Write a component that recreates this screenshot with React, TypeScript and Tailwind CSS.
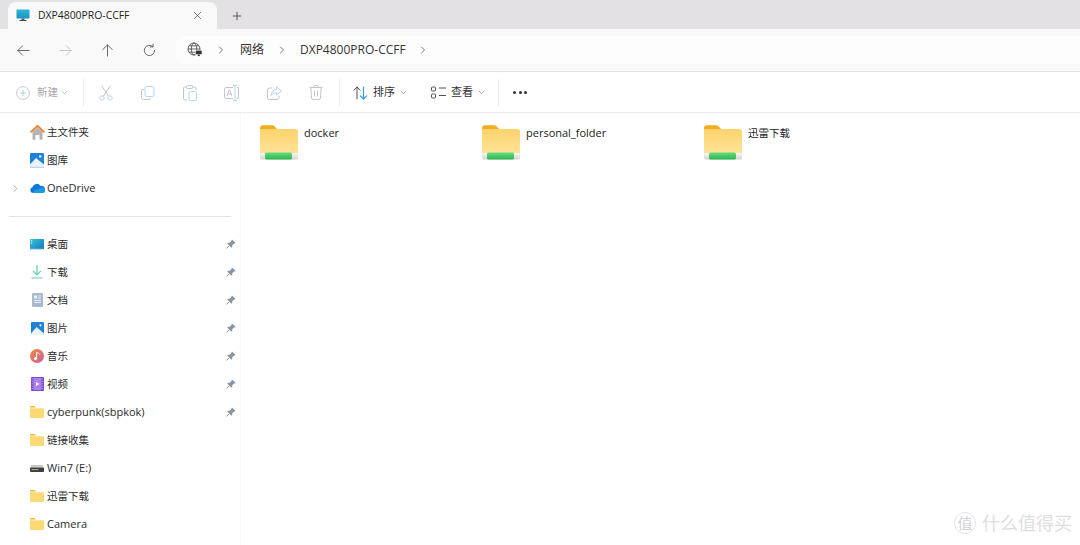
import { ChevronDown, ChevronRight } from "lucide-react";
import type { ReactNode } from "react";

const ui = "font-['Open_Sans','Noto_Sans_CJK_SC',sans-serif]";

function MonitorIcon() {
  return (
    <svg width="14" height="13" viewBox="0 0 14 13" aria-hidden>
      <defs>
        <linearGradient id="mon" x1="0" y1="0" x2="0" y2="1">
          <stop offset="0" stopColor="#2bb8d6" />
          <stop offset="1" stopColor="#1d93bd" />
        </linearGradient>
      </defs>
      <rect x="0.500" y="0.500" width="13" height="9" rx="0.800" fill="url(#mon)" />
      <rect x="5.500" y="9.500" width="3" height="1.800" fill="#52606b" />
      <rect x="3.500" y="11" width="7" height="1" fill="#3d4852" />
    </svg>
  );
}

function Stroke({ d, size = 16, color = "#5f5f5f", width = 1 }: { d: string; size?: number; color?: string; width?: number }) {
  return (
    <svg width={size} height={size} viewBox="0 0 16 16" fill="none" stroke={color} strokeWidth={width} strokeLinecap="round" strokeLinejoin="round" aria-hidden>
      <path d={d} />
    </svg>
  );
}

function NetworkIcon() {
  return (
    <svg width="16" height="16" viewBox="0 0 16 16" fill="none" stroke="#555" strokeWidth="0.9" aria-hidden>
      <circle cx="7" cy="7" r="6" />
      <ellipse cx="7" cy="7" rx="2.700" ry="6" />
      <path d="M1 7h12M2 3.800h10M2 10.200h10" />
      <rect x="8.600" y="8.200" width="6.400" height="4.300" fill="#333" stroke="#fff" strokeWidth="0.600" />
      <rect x="10.800" y="12.500" width="2" height="1.600" fill="#333" stroke="none" />
    </svg>
  );
}

function ToolIcon({ kind }: { kind: string }) {
  const gray = "#c5c5c5";
  const blue = "#b5d6ee";
  if (kind === "cut")
    return (
      <svg width="14" height="16" viewBox="0 0 14 16" fill="none" stroke={gray} aria-hidden>
        <path d="M2.500 0.500 9.500 11M11.500 0.500 4.500 11" />
        <circle cx="3" cy="13" r="2.200" stroke={blue} />
        <circle cx="11" cy="13" r="2.200" stroke={blue} />
      </svg>
    );
  if (kind === "copy")
    return (
      <svg width="14" height="14" viewBox="0 0 14 14" fill="none" aria-hidden>
        <path d="M3 3.500H2A1.500 1.500 0 0 0 .5 5v6.500A2 2 0 0 0 2.500 13.500H8a1.500 1.500 0 0 0 1.500-1.500" stroke={gray} />
        <rect x="4" y="0.500" width="9" height="10" rx="1.800" stroke={blue} />
      </svg>
    );
  if (kind === "paste")
    return (
      <svg width="14" height="16" viewBox="0 0 14 16" fill="none" aria-hidden>
        <path d="M3 2H1.800A1.300 1.300 0 0 0 .5 3.300v10.400a1.300 1.300 0 0 0 1.300 1.300H4M10 2h1.500A1.500 1.500 0 0 1 13 3.500V5" stroke={gray} />
        <rect x="3.500" y="0.500" width="6" height="3" rx="1" stroke={gray} />
        <rect x="6" y="6.500" width="7.500" height="9" rx="1.400" stroke={blue} />
      </svg>
    );
  if (kind === "rename")
    return (
      <svg width="16" height="16" viewBox="0 0 16 16" fill="none" aria-hidden>
        <path d="M9 2.500H2A1.500 1.500 0 0 0 .5 4v8A1.500 1.500 0 0 0 2 13.500h7M13 2.500h1.500V13.500H13" stroke={gray} />
        <path d="M9 .5h4M9 15.500h4M11 .5v15" stroke={blue} />
        <path d="M3 11 5.200 5h.6L8 11M3.800 9h3.400" stroke={gray} />
      </svg>
    );
  if (kind === "share")
    return (
      <svg width="15" height="14" viewBox="0 0 15 14" fill="none" aria-hidden>
        <path d="M5 2H2.500A2 2 0 0 0 .5 4v7.500a2 2 0 0 0 2 2H10a2 2 0 0 0 2-2V10" stroke={gray} />
        <path d="M9.500.8 14.500 5 9.500 9V6.600C7 6.600 5.200 7.500 4 9.500 4.300 6 6.300 3.700 9.500 3.400Z" stroke={blue} />
      </svg>
    );
  return (
    <svg width="14" height="15" viewBox="0 0 14 15" fill="none" stroke={gray} aria-hidden>
      <path d="M.5 2.500h13M5 2.500V1.300A.8.8 0 0 1 5.800.5h2.400a.8.8 0 0 1 .8.8v1.200M1.800 2.500l.7 10.500a1.500 1.500 0 0 0 1.500 1.400h6a1.500 1.500 0 0 0 1.500-1.400l.7-10.500M5.500 5.500v6M8.500 5.500v6" />
    </svg>
  );
}

function NewIcon() {
  return (
    <svg width="14" height="14" viewBox="0 0 14 14" fill="none" aria-hidden>
      <circle cx="7" cy="7" r="6.400" stroke="#c8c8c8" />
      <path d="M7 4v6M4 7h6" stroke="#a9cfec" />
    </svg>
  );
}

function SortIcon() {
  return (
    <svg width="15" height="14" viewBox="0 0 15 14" fill="none" strokeLinecap="round" strokeLinejoin="round" aria-hidden>
      <path d="M4 13V1M.8 4.200 4 1l3.200 3.200" stroke="#555" />
      <path d="M10.500 1v12M7.300 9.800l3.200 3.200 3.200-3.200" stroke="#2e9be6" strokeWidth="1.200" />
    </svg>
  );
}

function ViewIcon() {
  return (
    <svg width="15" height="13" viewBox="0 0 15 13" fill="none" stroke="#555" aria-hidden>
      <rect x="0.500" y="1" width="4" height="4" rx="1" />
      <rect x="0.500" y="8" width="4" height="4" rx="1" />
      <path d="M8 2h7M8 9.500h7" />
    </svg>
  );
}

function SmallFolder() {
  return (
    <svg width="14" height="12" viewBox="0 0 14 12" aria-hidden>
      <path d="M0 1.200C0 .5.5 0 1.200 0h3.200l1.500 1.500H0Z" fill="#f0b429" />
      <path d="M0 2.200h12.800c.7 0 1.200.5 1.200 1.200v7.400c0 .7-.5 1.200-1.200 1.200H1.200C.5 12 0 11.500 0 10.800Z" fill="#fdd976" />
    </svg>
  );
}

function HomeIcon() {
  return (
    <svg width="15" height="15" viewBox="0 0 15 15" aria-hidden>
      <path d="M2.500 7 7.500 2.500l5 4.500v7a.7.7 0 0 1-.7.7H9.500V10h-4v4.700H3.200a.7.7 0 0 1-.7-.7Z" fill="#b4b4b4" />
      <path d="M.6 7.300 7.500.8l6.900 6.500" fill="none" stroke="#ee7f2d" strokeWidth="1.800" />
    </svg>
  );
}

function GalleryIcon() {
  return (
    <svg width="14" height="15" viewBox="0 0 14 15" aria-hidden>
      <rect width="14" height="13" rx="1.200" fill="#1e82d6" />
      <circle cx="10.200" cy="3.400" r="1.200" fill="#fff" />
      <path d="M0 11.500 6 5l8 6.500V13H0Z" fill="#e8f3fb" />
      <rect y="13.500" width="14" height="1.500" fill="#bcd9ef" />
    </svg>
  );
}

function PictureIcon() {
  return (
    <svg width="13" height="13" viewBox="0 0 14 14" aria-hidden>
      <rect width="14" height="14" rx="1.200" fill="#1e82d6" />
      <circle cx="10.200" cy="3.600" r="1.200" fill="#fff" />
      <path d="M0 12.500 6 5.500l8 7v.3A1.200 1.200 0 0 1 12.800 14H1.200A1.200 1.200 0 0 1 0 12.800Z" fill="#e8f3fb" />
    </svg>
  );
}

function CloudIcon() {
  return (
    <svg width="15" height="10" viewBox="0 0 15 10" aria-hidden>
      <path d="M3 10A3 3 0 0 1 2.600 4.100 4.300 4.300 0 0 1 10.400 2.900 3.600 3.600 0 0 1 12.400 10Z" fill="#0f78d4" />
      <path d="M3 10h9.400A2.600 2.600 0 0 0 15 7.400c0-1-.7-1.900-1.500-2.300-2-1.200-3.800-.5-5 1.300-1.600-.7-4.200 0-5.500 3.600Z" fill="#1c9ae8" />
    </svg>
  );
}

function DesktopIcon() {
  return (
    <svg width="14" height="11" viewBox="0 0 14 11" aria-hidden>
      <defs>
        <linearGradient id="desk" x1="0" y1="0" x2="1" y2="1">
          <stop offset="0" stopColor="#34c3d8" />
          <stop offset="1" stopColor="#1478b8" />
        </linearGradient>
      </defs>
      <rect width="14" height="11" rx="0.800" fill="url(#desk)" />
      <rect x="1" y="1.200" width="1.200" height="1.200" fill="#dff5fa" />
      <rect x="1" y="3.600" width="1.200" height="1.200" fill="#dff5fa" />
      <rect y="9.800" width="14" height="1.200" fill="#c7dbe6" />
    </svg>
  );
}

function DownloadIcon() {
  return (
    <svg width="12" height="14" viewBox="0 0 12 14" fill="none" stroke="#5fcdb0" strokeWidth="1.200" aria-hidden>
      <path d="M6 0v9.500M2 5.800 6 9.800l4-4" />
      <path d="M.5 13h11" stroke="#7ed8c2" />
    </svg>
  );
}

function DocIcon() {
  return (
    <svg width="11" height="14" viewBox="0 0 11 14" aria-hidden>
      <rect width="11" height="14" rx="1" fill="#a9bad0" />
      <rect x="2" y="2.500" width="3" height="3" fill="#eef2f7" />
      <path d="M6 3h3M6 5h3M2 7.500h7M2 9.500h7" stroke="#eef2f7" strokeWidth="0.900" />
    </svg>
  );
}

function MusicIcon() {
  return (
    <svg width="14" height="14" viewBox="0 0 14 14" aria-hidden>
      <defs>
        <linearGradient id="mus" x1="0" y1="0" x2="1" y2="1">
          <stop offset="0" stopColor="#ee8a3c" />
          <stop offset="1" stopColor="#c95f9e" />
        </linearGradient>
      </defs>
      <circle cx="7" cy="7" r="7" fill="url(#mus)" />
      <circle cx="5.500" cy="9.600" r="1.600" fill="#fff" />
      <path d="M6.600 9.600V3.600c1 .1 2.600.5 3 1.900" fill="none" stroke="#fff" strokeWidth="1" />
    </svg>
  );
}

function VideoIcon() {
  return (
    <svg width="13" height="14" viewBox="0 0 13 14" aria-hidden>
      <rect width="13" height="14" rx="1" fill="#7b3fd0" />
      <rect x="2.400" y="0.800" width="8.200" height="12.400" fill="#a884e8" />
      <path d="M5 5v4l3.400-2Z" fill="#fff" />
      <path d="M1.200 1.500v11" stroke="#d9c7f5" strokeDasharray="1 1.400" />
      <path d="M11.800 1.500v11" stroke="#d9c7f5" strokeDasharray="1 1.400" />
    </svg>
  );
}

function DriveIcon() {
  return (
    <svg width="14" height="7" viewBox="0 0 14 7" aria-hidden>
      <path d="M1.500 0h11L14 2.500H0Z" fill="#c9c9c9" />
      <rect y="2.500" width="14" height="4.500" rx="0.800" fill="#3f3f3f" />
      <rect x="1.500" y="4.200" width="7" height="0.900" fill="#9fd18a" />
    </svg>
  );
}

function PinIcon() {
  return (
    <svg width="10" height="10" viewBox="0 0 10 10" aria-hidden>
      <path d="M6 .4 9.600 4 8.800 4.600 8 4.400 6.200 6.300 6.200 8 5.400 8.700 1.300 4.600 2 3.800h1.700L5.600 2 5.400 1.200Z" fill="#8a949c" />
      <path d="M3.200 6.800.6 9.400" stroke="#8a949c" strokeWidth="1" />
    </svg>
  );
}

function BigFolder() {
  return (
    <svg width="38" height="35" viewBox="0 0 38 35" aria-hidden>
      <defs>
        <linearGradient id="big" x1="0" y1="0" x2="0" y2="1">
          <stop offset="0" stopColor="#fdd36c" />
          <stop offset="1" stopColor="#fee39a" />
        </linearGradient>
        <linearGradient id="bar" x1="0" y1="0" x2="0" y2="1">
          <stop offset="0" stopColor="#66dc80" />
          <stop offset="1" stopColor="#2cb550" />
        </linearGradient>
        <linearGradient id="end" x1="0" y1="0" x2="0" y2="1">
          <stop offset="0" stopColor="#f8f8f4" />
          <stop offset="1" stopColor="#d2d2ce" />
        </linearGradient>
      </defs>
      <path d="M0 3C0 1.400 1.200.3 2.800.3h9.400c1 0 1.600.4 2.300 1l2.500 2.700H0Z" fill="#f2ae1c" />
      <path d="M0 4h35.500c1.400 0 2.500 1.100 2.500 2.500V29H0Z" fill="url(#big)" />
      <rect x="0" y="28" width="38" height="6.500" rx="1.500" fill="url(#end)" />
      <rect x="5" y="27.500" width="27" height="7" rx="1.500" fill="url(#bar)" />
    </svg>
  );
}

type SideItem = { icon: ReactNode; label: string; pinned?: boolean; expandable?: boolean };

const topItems: SideItem[] = [
  { icon: <HomeIcon />, label: "主文件夹" },
  { icon: <GalleryIcon />, label: "图库" },
  { icon: <CloudIcon />, label: "OneDrive", expandable: true },
];

const quickItems: SideItem[] = [
  { icon: <DesktopIcon />, label: "桌面", pinned: true },
  { icon: <DownloadIcon />, label: "下载", pinned: true },
  { icon: <DocIcon />, label: "文档", pinned: true },
  { icon: <PictureIcon />, label: "图片", pinned: true },
  { icon: <MusicIcon />, label: "音乐", pinned: true },
  { icon: <VideoIcon />, label: "视频", pinned: true },
  { icon: <SmallFolder />, label: "cyberpunk(sbpkok)", pinned: true },
  { icon: <SmallFolder />, label: "链接收集" },
  { icon: <DriveIcon />, label: "Win7 (E:)" },
  { icon: <SmallFolder />, label: "迅雷下载" },
  { icon: <SmallFolder />, label: "Camera" },
];

// CJK glyphs come out a bit wide next to the latin labels at the same size
const isLatin = (label: string) => /^[\x00-\x7f]+$/.test(label);

function SideRow({ item }: { item: SideItem }) {
  return (
    <div className="flex h-7 items-center text-[#2b2b2b]">
      <span className="flex w-[29px] items-center justify-center pl-[2px]">
        {item.expandable && <ChevronRight size={11} strokeWidth={1.400} color="#777" />}
      </span>
      <span className="flex w-[16px] items-center justify-center">{item.icon}</span>
      <span className={`ml-[2px] flex-1 ${isLatin(item.label) ? "text-[11px]" : "pt-[1px] text-[10.500px]"}`}>{item.label}</span>
      {item.pinned && (
        <span className="mr-[4px] flex w-[10px] items-center justify-center">
          <PinIcon />
        </span>
      )}
    </div>
  );
}

function ToolButton({ kind }: { kind: string }) {
  return <span className="flex w-[42px] items-center justify-center"><ToolIcon kind={kind} /></span>;
}

const files = ["docker", "personal_folder", "迅雷下载"];

export default function App() {
  return (
    <div className={`flex h-[545px] w-[1080px] flex-col overflow-hidden bg-white ${ui}`}>
      {/* tab strip */}
      <div className="flex h-[29px] items-end bg-[#e3e1e4] pl-2">
        <div className="flex h-[27px] w-[209px] items-center rounded-t-lg bg-[#f9f9f9] pl-2 pr-[14px]">
          <MonitorIcon />
          <span className="ml-2 flex-1 pt-[1px] text-[10.400px] text-[#222]">DXP4800PRO-CCFF</span>
          <Stroke d="M3.500 3.500 12.500 12.500M12.500 3.500 3.500 12.500" size={11} color="#666" width={1.300} />
        </div>
        <div className="ml-[14px] flex h-[27px] items-center">
          <Stroke d="M8 3v10M3 8h10" size={12} color="#555" width={1.300} />
        </div>
      </div>

      {/* nav row */}
      <div className="flex h-[43px] items-center border-b border-[#e3e3e3] bg-[#f9f9f9]">
        <div className="flex w-[176px] items-center pl-[2px]">
          <span className="flex w-[42px] justify-center"><Stroke d="M14 8H2M7 3 2 8l5 5" size={15} /></span>
          <span className="flex w-[42px] justify-center"><Stroke d="M2 8h12M9 3l5 5-5 5" size={15} color="#c4c4c4" /></span>
          <span className="flex w-[42px] justify-center"><Stroke d="M8 14V2M3 7l5-5 5 5" size={15} /></span>
          <span className="flex w-[42px] justify-center"><Stroke d="M13.500 8A5.500 5.500 0 1 1 11.500 3.700M11.800 1.200v3h-3" size={15} /></span>
        </div>
        <div className="flex h-[28px] flex-1 items-center rounded-l-md bg-[#fdfdfd] pl-[11px] text-[12px] text-[#333]">
          <NetworkIcon />
          <ChevronRight size={12} strokeWidth={1.500} color="#444" className="ml-[12px]" />
          <span className="ml-[13px]">网络</span>
          <ChevronRight size={12} strokeWidth={1.500} color="#444" className="ml-[12px]" />
          <span className="ml-[12px]">DXP4800PRO-CCFF</span>
          <ChevronRight size={12} strokeWidth={1.500} color="#444" className="ml-[11px]" />
        </div>
      </div>

      {/* command bar */}
      <div className="flex h-[41px] items-center border-b border-[#ececec] bg-white pt-[1px] text-[10.500px]">
        <div className="flex w-[83px] items-center pl-[16px] text-[#a8a8a8]">
          <NewIcon />
          <span className="ml-[7px]">新建</span>
          <ChevronDown size={9} className="ml-[2px]" color="#aaa" />
        </div>
        <span className="h-[27px] w-px bg-[#ececec]" />
        <div className="ml-[1px] flex items-center">
          {["cut", "copy", "paste", "rename", "share", "delete"].map((kind) => (
            <ToolButton key={kind} kind={kind} />
          ))}
        </div>
        <span className="ml-[2px] h-[27px] w-px bg-[#ececec]" />
        <div className="ml-[13px] flex w-[78px] items-center text-[#333]">
          <SortIcon />
          <span className="ml-[5px] text-[11px]">排序</span>
          <ChevronDown size={9} className="ml-[4px]" color="#888" />
        </div>
        <div className="flex w-[67px] items-center text-[#333]">
          <ViewIcon />
          <span className="ml-[5px] text-[11px]">查看</span>
          <ChevronDown size={9} className="ml-[4px]" color="#888" />
        </div>
        <span className="h-[27px] w-px bg-[#ececec]" />
        <div className="ml-[14px] flex items-center gap-[2.500px]">
          <span className="size-[3px] rounded-full bg-[#333]" />
          <span className="size-[3px] rounded-full bg-[#333]" />
          <span className="size-[3px] rounded-full bg-[#333]" />
        </div>
      </div>

      {/* body */}
      <div className="relative flex flex-1">
        <aside className="w-[241px] border-r border-[#f8f8f8] pt-[5px]">
          {topItems.map((item) => (
            <SideRow key={item.label} item={item} />
          ))}
          <div className="mr-[9px] ml-[9px] mt-[14px] mb-[13px] h-px bg-[#e4e4e4]" />
          {quickItems.map((item) => (
            <SideRow key={item.label} item={item} />
          ))}
        </aside>
        <main className="flex flex-1 items-start pl-[19px] pt-[12px]">
          {files.map((name) => (
            <div key={name} className="flex w-[222px] items-start">
              <BigFolder />
              <span className={`ml-[6px] mt-[-1px] leading-[18px] text-[#222] ${isLatin(name) ? "text-[11px]" : "text-[10.500px]"}`}>{name}</span>
            </div>
          ))}
        </main>
        {/* site watermark */}
        <div className="absolute right-[8px] bottom-[11px] flex items-center text-[18px] leading-none text-[#dedede]">
          <span className="flex size-[22px] items-center justify-center rounded-full border border-[#e4e4e4] text-[15px] text-[#d2d2d2]">值</span>
          <span className="ml-[6px]">什么值得买</span>
        </div>
      </div>
    </div>
  );
}
